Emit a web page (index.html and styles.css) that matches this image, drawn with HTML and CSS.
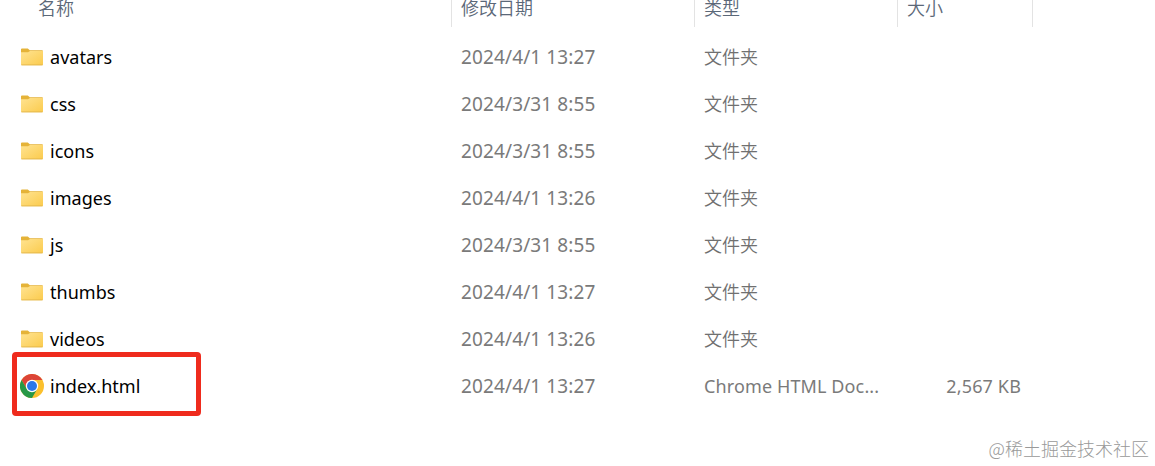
FILE: index.html
```html
<!DOCTYPE html>
<html lang="zh-CN">
<head>
<meta charset="utf-8">
<title>文件列表</title>
<link rel="stylesheet" href="styles.css">
</head>
<body>
<svg class="defs" width="0" height="0" aria-hidden="true">
  <defs>
    <linearGradient id="fold" x1="0" y1="0" x2="1" y2="1"><stop offset="0" stop-color="#ffe391"/><stop offset="1" stop-color="#fbcb4d"/></linearGradient>
    <symbol id="folder" viewBox="0 0 22 18">
      <path d="M0 1.3Q0 .4 1 .4H6.8L8.8 2.2H21Q22 2.2 22 3.2V9H0Z" fill="#e5b338"/>
      <path d="M0 4.3H7L9 3H22V16.3Q22 17.3 21 17.3H1Q0 17.3 0 16.3Z" fill="url(#fold)"/>
      <path d="M.3 16.9H21.7" stroke="#dfb24a" stroke-width=".8"/>
    </symbol>
  </defs>
</svg>
<main class="explorer">
  <header class="row head">
    <span class="cell first">名称</span><span class="cell">修改日期</span><span class="cell">类型</span><span class="cell">大小</span>
  </header>
  <div class="row"><div class="name"><svg class="folder"><use href="#folder"/></svg><span>avatars</span></div><span class="date">2024/4/1 13:27</span><span class="type">文件夹</span></div>
  <div class="row"><div class="name"><svg class="folder"><use href="#folder"/></svg><span>css</span></div><span class="date">2024/3/31 8:55</span><span class="type">文件夹</span></div>
  <div class="row"><div class="name"><svg class="folder"><use href="#folder"/></svg><span>icons</span></div><span class="date">2024/3/31 8:55</span><span class="type">文件夹</span></div>
  <div class="row"><div class="name"><svg class="folder"><use href="#folder"/></svg><span>images</span></div><span class="date">2024/4/1 13:26</span><span class="type">文件夹</span></div>
  <div class="row"><div class="name"><svg class="folder"><use href="#folder"/></svg><span>js</span></div><span class="date">2024/3/31 8:55</span><span class="type">文件夹</span></div>
  <div class="row"><div class="name"><svg class="folder"><use href="#folder"/></svg><span>thumbs</span></div><span class="date">2024/4/1 13:27</span><span class="type">文件夹</span></div>
  <div class="row"><div class="name"><svg class="folder"><use href="#folder"/></svg><span>videos</span></div><span class="date">2024/4/1 13:26</span><span class="type">文件夹</span></div>
  <div class="row">
    <div class="name">
      <svg class="chrome" viewBox="0 0 48 48">
        <circle cx="24" cy="24" r="24" fill="#fbc02d"/>
        <path d="M3.2 12A24 24 0 0 1 44.8 12H24L13.6 30Z" fill="#dc4437"/>
        <path d="M3.2 12A24 24 0 0 0 24 48L34.4 30L24 35L13.6 30Z" fill="#279847"/>
        <circle cx="24" cy="24" r="12.4" fill="#fff"/>
        <circle cx="24" cy="24" r="10" fill="#2b78e8"/>
      </svg>
      <span>index.html</span>
    </div>
    <span class="date">2024/4/1 13:27</span><span class="type latin">Chrome HTML Doc...</span><span class="size">2,567 KB</span>
    <div class="marker"></div>
  </div>
  <footer class="watermark">@稀土掘金技术社区</footer>
</main>
</body>
</html>
```

FILE: styles.css
```css
* { box-sizing: border-box; }
body {
  margin: 0;
  background: #fff;
  font-family: "Noto Sans", "Noto Sans CJK SC", sans-serif;
  font-size: 18px;
  color: #707070;
}
.defs { display: block; }
.explorer { width: 1155px; height: 466px; overflow: hidden; display: flex; flex-direction: column; }
.row {
  position: relative;
  flex: none;
  display: grid;
  grid-template-columns: 452px 243px 203px 135px;
  align-items: center;
  height: 47px;
  line-height: 26px;
  white-space: nowrap;
}
.head { height: 33px; align-items: start; color: #5b6878; font-family: "Noto Sans CJK SC", sans-serif; font-weight: 350; }
.cell { height: 27px; padding-left: 9px; border-right: 1px solid #e3e3e3; line-height: 14px; }
.first { padding-left: 38px; }
.name { display: flex; align-items: center; padding-left: 20px; color: #000; }
.name span { margin-left: 6px; letter-spacing: .03px; }
.folder { width: 22px; height: 18px; margin: 0 1px; flex: none; }
.chrome { width: 24px; height: 24px; flex: none; }
.date, .type, .size { padding-left: 9px; }
.date { font-size: 19px; color: #7a7a7a; letter-spacing: .12px; }
.type { font-family: "Noto Sans CJK SC", sans-serif; font-weight: 350; padding-bottom: 2px; }
.latin { font-family: "Noto Sans", sans-serif; font-weight: 400; color: #7a7a7a; letter-spacing: .12px; padding-bottom: 0; }
.size { text-align: right; padding-right: 12px; color: #7a7a7a; letter-spacing: .15px; }
.marker {
  position: absolute;
  left: 12px;
  top: -10px;
  width: 189px;
  height: 64px;
  border: 5px solid #ef2b1d;
  border-radius: 4px;
}
.watermark {
  margin-top: 26px;
  padding-right: 6px;
  text-align: right;
  font-size: 18px;
  line-height: 26px;
  font-family: "Noto Sans CJK SC", sans-serif;
  font-weight: 300;
  color: #999;
}
```
